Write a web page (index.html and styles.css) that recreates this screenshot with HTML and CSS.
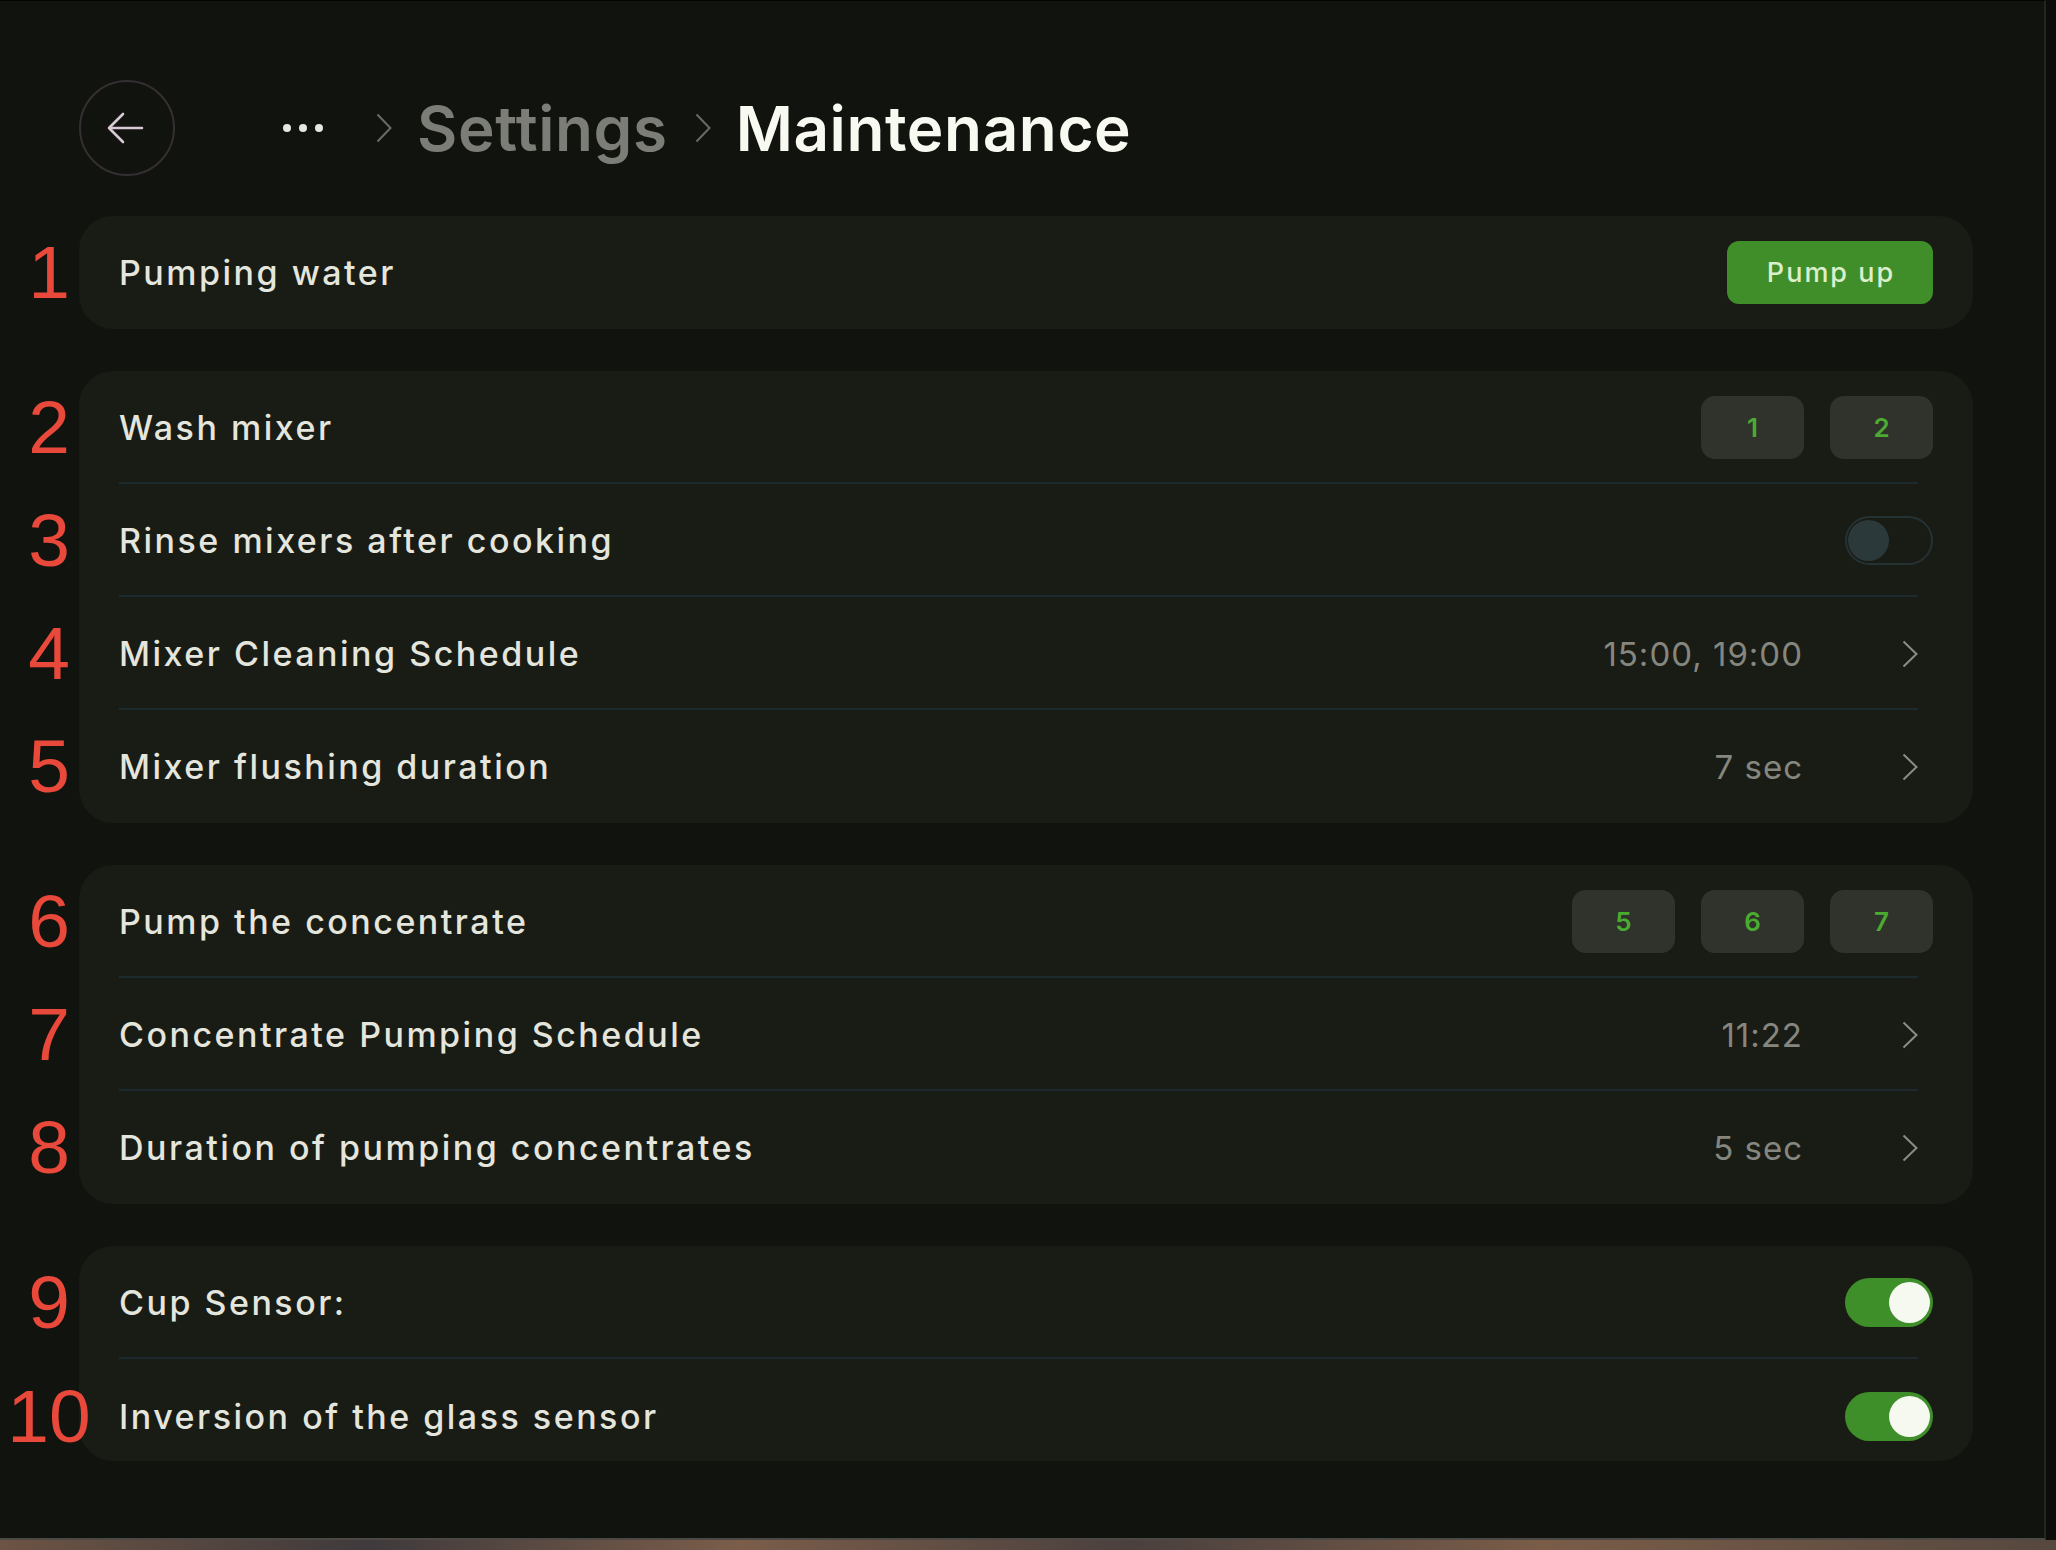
FILE: index.html
```html
<!DOCTYPE html>
<html lang="en">
<head>
    <meta charset="UTF-8">
    <meta name="viewport" content="width=device-width, initial-scale=1.0">
    <title>Maintenance</title>
    <link rel="stylesheet" href="styles.css">
</head>
<body>
<div class="screen">
    <header class="topbar">
        <button class="back" aria-label="Back">
            <svg width="40" height="34" viewBox="0 0 40 34">
                <path d="M18 3 L4 17 L18 31 M4 17 H37" fill="none" stroke="#d8c9d4" stroke-width="2.6" stroke-linecap="round" stroke-linejoin="round"/>
            </svg>
        </button>
        <nav class="crumbs">
            <svg class="dots" width="40" height="10" viewBox="0 0 40 10">
                <circle cx="4" cy="5" r="4" fill="#e6e6e2"/>
                <circle cx="20" cy="5" r="4" fill="#e6e6e2"/>
                <circle cx="36" cy="5" r="4" fill="#e6e6e2"/>
            </svg>
            <svg class="crumb-chev" width="16" height="30" viewBox="0 0 16 30">
                <path d="M1.5 1.5 L14.5 15 L1.5 28.5" fill="none" stroke="#6a6c64" stroke-width="2"/>
            </svg>
            <span class="crumb">Settings</span>
            <svg class="crumb-chev" width="16" height="30" viewBox="0 0 16 30">
                <path d="M1.5 1.5 L14.5 15 L1.5 28.5" fill="none" stroke="#6a6c64" stroke-width="2"/>
            </svg>
            <span class="crumb current">Maintenance</span>
        </nav>
    </header>

    <main class="list">
        <section class="card">
            <div class="row">
                <span class="mark">1</span>
                <span class="label">Pumping water</span>
                <button class="btn-pump">Pump up</button>
            </div>
        </section>

        <section class="card">
            <div class="row">
                <span class="mark">2</span>
                <span class="label">Wash mixer</span>
                <div class="keys">
                    <button class="key">1</button>
                    <button class="key">2</button>
                </div>
            </div>
            <div class="row">
                <span class="mark">3</span>
                <span class="label">Rinse mixers after cooking</span>
                <div class="toggle off"><span class="knob"></span></div>
            </div>
            <div class="row">
                <span class="mark">4</span>
                <span class="label">Mixer Cleaning Schedule</span>
                <span class="value">15:00, 19:00</span>
                <svg class="chev" width="16" height="28" viewBox="0 0 16 28">
                    <path d="M1.5 1.5 L14.5 14 L1.5 26.5" fill="none" stroke="#8b8d85" stroke-width="2"/>
                </svg>
            </div>
            <div class="row">
                <span class="mark">5</span>
                <span class="label">Mixer flushing duration</span>
                <span class="value">7 sec</span>
                <svg class="chev" width="16" height="28" viewBox="0 0 16 28">
                    <path d="M1.5 1.5 L14.5 14 L1.5 26.5" fill="none" stroke="#8b8d85" stroke-width="2"/>
                </svg>
            </div>
        </section>

        <section class="card">
            <div class="row">
                <span class="mark">6</span>
                <span class="label">Pump the concentrate</span>
                <div class="keys">
                    <button class="key">5</button>
                    <button class="key">6</button>
                    <button class="key">7</button>
                </div>
            </div>
            <div class="row">
                <span class="mark">7</span>
                <span class="label">Concentrate Pumping Schedule</span>
                <span class="value">11:22</span>
                <svg class="chev" width="16" height="28" viewBox="0 0 16 28">
                    <path d="M1.5 1.5 L14.5 14 L1.5 26.5" fill="none" stroke="#8b8d85" stroke-width="2"/>
                </svg>
            </div>
            <div class="row">
                <span class="mark">8</span>
                <span class="label">Duration of pumping concentrates</span>
                <span class="value">5 sec</span>
                <svg class="chev" width="16" height="28" viewBox="0 0 16 28">
                    <path d="M1.5 1.5 L14.5 14 L1.5 26.5" fill="none" stroke="#8b8d85" stroke-width="2"/>
                </svg>
            </div>
        </section>

        <section class="card">
            <div class="row">
                <span class="mark">9</span>
                <span class="label">Cup Sensor:</span>
                <div class="toggle on"><span class="knob"></span></div>
            </div>
            <div class="row short">
                <span class="mark">10</span>
                <span class="label">Inversion of the glass sensor</span>
                <div class="toggle on"><span class="knob"></span></div>
            </div>
        </section>
    </main>
</div>
<div class="taskbar"></div>
</body>
</html>
```

FILE: styles.css
```css
* {
    box-sizing: border-box;
}

body {
    margin: 0;
    background-color: #0c0d0a;
    font-family: Inter, "Noto Sans", sans-serif;
    color: #e4e6de;
}

.screen {
    width: 2046px;
    height: 1540px;
    background-color: #11130e;
    border-top: 1px solid #030403;
    border-right: 2px solid #25261f;
    border-bottom: 2px solid #4c4944;
    padding: 79px 0 0 79px;
}

.topbar {
    display: flex;
    align-items: center;
    height: 96px;
}

.back {
    width: 96px;
    height: 96px;
    border-radius: 50%;
    border: 2px solid #352f33;
    background: none;
    padding: 0 4px 0 0;
    display: flex;
    align-items: center;
    justify-content: center;
    margin-right: 108px;
}

.crumbs {
    display: flex;
    align-items: center;
}

.dots {
    margin-right: 53px;
}

.crumb-chev {
    margin-right: 25px;
}

.crumb {
    font-size: 62px;
    font-weight: 600;
    letter-spacing: 0.6px;
    color: #7b7d76;
    margin-right: 27px;
}

.crumb.current {
    color: #f8faf2;
    margin-right: 0;
}

.list {
    display: flex;
    flex-direction: column;
    gap: 42px;
    margin-top: 40px;
    width: 1894px;
}

.card {
    background-color: #191b15;
    border-radius: 34px;
}

.row {
    display: flex;
    align-items: center;
    height: 113px;
    padding: 0 40px;
}

.row:not(:last-child) {
    background-image: linear-gradient(#1c2a2d, #1c2a2d);
    background-repeat: no-repeat;
    background-size: calc(100% - 95px) 2px;
    background-position: 40px 100%;
}

.row.short {
    height: 102px;
    padding-top: 12px;
}

.mark {
    flex: none;
    width: 98px;
    margin-left: -119px;
    margin-right: 21px;
    text-align: center;
    font-family: "Liberation Sans", Arial, sans-serif;
    font-size: 75px;
    line-height: 1;
    color: #e8493a;
}

.label {
    flex: 1;
    font-size: 34px;
    font-weight: 500;
    letter-spacing: 2.5px;
    color: #e4e6de;
}

.value {
    font-size: 33px;
    letter-spacing: 1px;
    color: #85877f;
    margin-right: 99px;
}

.chev {
    flex: none;
    margin-right: 15px;
}

.btn-pump {
    width: 206px;
    height: 63px;
    border: none;
    border-radius: 12px;
    background-color: #3f8e2a;
    color: #dbefcc;
    font-family: Inter, sans-serif;
    font-size: 27px;
    font-weight: 500;
    letter-spacing: 2px;
    padding: 0 0 0 2px;
}

.keys {
    display: flex;
    gap: 26px;
}

.key {
    width: 103px;
    height: 63px;
    border: none;
    border-radius: 14px;
    background-color: #30332b;
    color: #4bab31;
    font-family: Inter, sans-serif;
    font-size: 26px;
    font-weight: 600;
}

.toggle {
    width: 88px;
    height: 49px;
    border-radius: 25px;
    padding: 3px;
    display: flex;
    align-items: center;
}

.toggle.off {
    border: 2px solid #243234;
    padding: 1px;
    justify-content: flex-start;
}

.toggle.on {
    background-color: #3e8e29;
    justify-content: flex-end;
}

.knob {
    width: 41px;
    height: 41px;
    border-radius: 50%;
}

.off .knob {
    background-color: #2c393a;
}

.on .knob {
    background-color: #f5f9ef;
}

.taskbar {
    height: 10px;
    background: linear-gradient(90deg, #6d5444, #3f3a3c 18%, #7b5d4a 36%, #4a403e 55%, #7a5c48 75%, #56483f);
}
```
